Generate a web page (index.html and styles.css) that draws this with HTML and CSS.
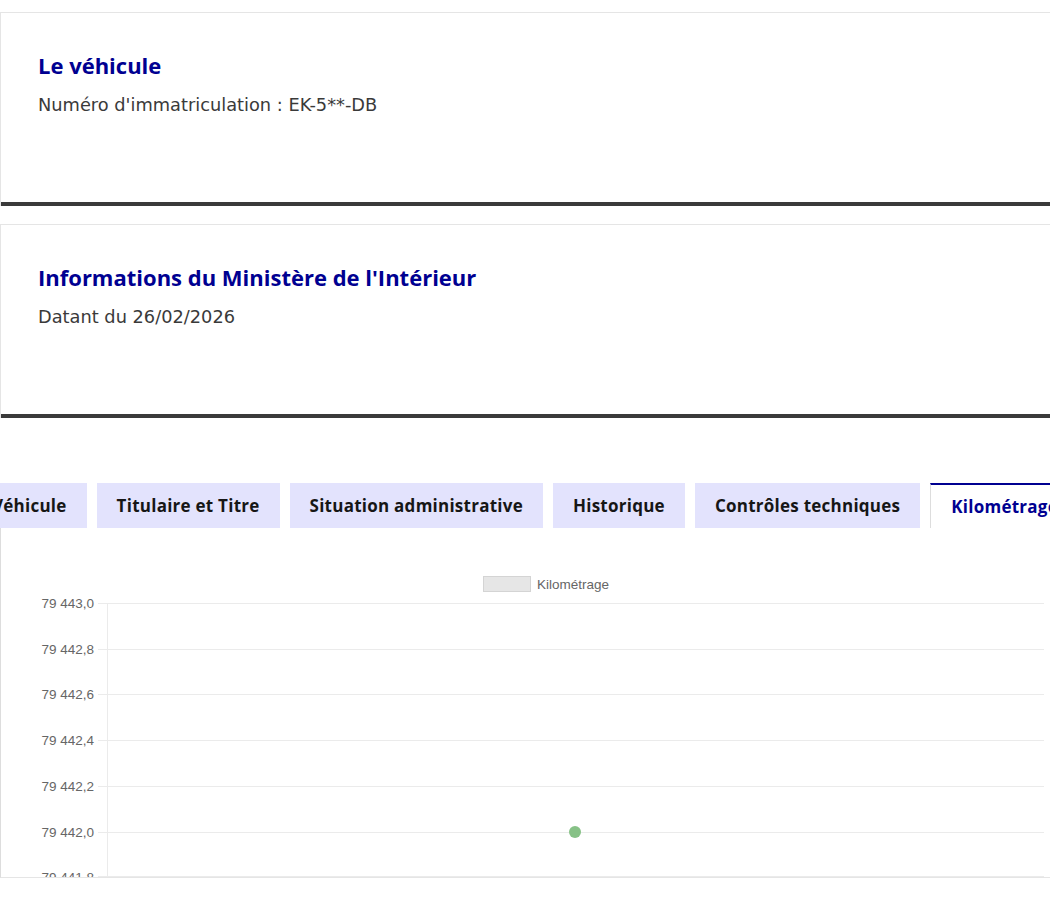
FILE: index.html
```html
<!DOCTYPE html>
<html lang="fr">
<head>
    <meta charset="UTF-8">
    <meta name="viewport" content="width=device-width, initial-scale=1.0">
    <title>Historique du véhicule</title>
    <link rel="stylesheet" href="styles.css">
</head>
<body>
    <div class="page">
        <!-- Carte véhicule -->
        <section class="tile">
            <h2 class="tile-title">Le véhicule</h2>
            <p class="tile-desc">Numéro d'immatriculation : EK-5**-DB</p>
        </section>

        <!-- Carte ministère -->
        <section class="tile">
            <h2 class="tile-title">Informations du Ministère de l'Intérieur</h2>
            <p class="tile-desc">Datant du 26/02/2026</p>
        </section>

        <!-- Onglets -->
        <div class="tabs">
            <ul class="tab-list">
                <li class="tab">Véhicule</li>
                <li class="tab">Titulaire et Titre</li>
                <li class="tab">Situation administrative</li>
                <li class="tab">Historique</li>
                <li class="tab">Contrôles techniques</li>
                <li class="tab active">Kilométrage</li>
            </ul>

            <div class="tab-panel">
                <svg class="chart" width="1100" height="349" viewBox="0 0 1100 349">
                    <!-- légende -->
                    <rect class="legend-box" x="482.5" y="48.5" width="47" height="15"></rect>
                    <text class="legend-label" x="536" y="60.5">Kilométrage</text>

                    <!-- grille -->
                    <g class="grid">
                        <line x1="97" y1="75.5" x2="1043" y2="75.5"></line>
                        <line x1="97" y1="121.5" x2="1043" y2="121.5"></line>
                        <line x1="97" y1="166.5" x2="1043" y2="166.5"></line>
                        <line x1="97" y1="212.5" x2="1043" y2="212.5"></line>
                        <line x1="97" y1="258.5" x2="1043" y2="258.5"></line>
                        <line x1="97" y1="304.5" x2="1043" y2="304.5"></line>
                        <line x1="97" y1="348.5" x2="1043" y2="348.5"></line>
                        <line x1="106.5" y1="75" x2="106.5" y2="349"></line>
                    </g>

                    <!-- axe Y -->
                    <g class="y-labels">
                        <text x="93" y="80">79 443,0</text>
                        <text x="93" y="126">79 442,8</text>
                        <text x="93" y="171">79 442,6</text>
                        <text x="93" y="217">79 442,4</text>
                        <text x="93" y="263">79 442,2</text>
                        <text x="93" y="309">79 442,0</text>
                        <text x="93" y="354">79 441,8</text>
                    </g>

                    <circle class="point" cx="574" cy="304" r="6"></circle>
                </svg>
            </div>
        </div>
    </div>
</body>
</html>
```

FILE: styles.css
```css
/* base */
:root {
    --blue-france: #000091;
    --blue-light: #e3e3fd;
    --grey-border: #e5e5e5;
    --grey-dark: #3a3a3a;
    --text: #161616;
}

* {
    margin: 0;
    padding: 0;
    box-sizing: border-box;
}

body {
    background: white;
    color: var(--text);
    font-family: 'Open Sans', 'Noto Sans', sans-serif;
    overflow: hidden;
}

.page {
    width: 1120px;
    padding-top: 12px;
}

/* cartes */
.tile {
    height: 194px;
    margin-bottom: 18px;
    padding: 36px 38px 36px 37px;
    border: 1px solid var(--grey-border);
    border-bottom: none;
    box-shadow: inset 0 -4px 0 var(--grey-dark);
}

.tile-title {
    font-size: 22px;
    font-weight: 700;
    line-height: 32px;
    color: var(--blue-france);
}

.tile-desc {
    margin-top: 12px;
    font-family: 'DejaVu Sans', 'Open Sans', sans-serif;
    font-size: 17.8px;
    line-height: 24px;
    color: var(--grey-dark);
}

/* onglets */
.tabs {
    margin-top: 65px;
}

.tab-list {
    display: flex;
    gap: 10px;
    margin-left: -28px;
    list-style: none;
}

.tab {
    height: 45px;
    padding: 0 20px;
    display: flex;
    align-items: center;
    background: var(--blue-light);
    font-size: 17px;
    font-weight: 700;
    letter-spacing: 0.25px;
    white-space: nowrap;
}

.tab.active {
    background: white;
    color: var(--blue-france);
    border-top: 2px solid var(--blue-france);
    border-left: 1px solid #ddd;
    border-right: 1px solid #ddd;
}

.tab-panel {
    height: 350px;
    border-left: 1px solid #ddd;
    border-bottom: 1px solid var(--grey-border);
    overflow: hidden;
}

/* graphique */
.chart {
    display: block;
    font-family: 'Liberation Sans', Arial, sans-serif;
}

.grid line {
    stroke: #ebebeb;
    stroke-width: 1;
}

.y-labels text {
    font-size: 13.5px;
    fill: #666;
    text-anchor: end;
}

.legend-box {
    fill: #e6e6e6;
    stroke: #d4d4d4;
}

.legend-label {
    font-size: 13.5px;
    fill: #666;
}

.point {
    fill: #86c186;
}
```
